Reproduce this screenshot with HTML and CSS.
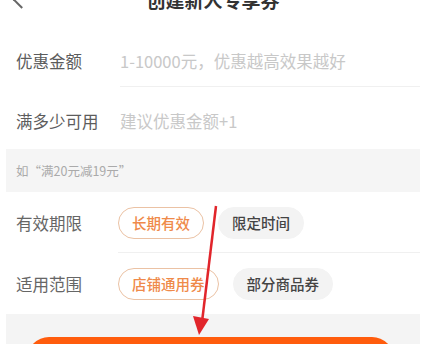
FILE: index.html
```html
<!DOCTYPE html>
<html lang="zh-CN">
<head>
  <meta charset="UTF-8">
  <meta name="viewport" content="width=device-width, initial-scale=1.0">
  <title>创建新人专享券</title>
  <link rel="stylesheet" href="styles.css">
</head>
<body>

  <div class="page">
    <div class="header">
      <span class="back"></span>
      <h2 class="title">创建新人专享券</h2>
    </div>

    <div class="form-row first">
      <span class="row-label">优惠金额</span>
      <span class="placeholder">1-10000元，优惠越高效果越好</span>
    </div>

    <div class="form-row second">
      <span class="row-label">满多少可用</span>
      <span class="placeholder">建议优惠金额+1</span>
    </div>

    <div class="tip">如“满20元减19元”</div>

    <div class="form-row option-row divided">
      <span class="row-label small">有效期限</span>
      <span class="chip active">长期有效</span>
      <span class="chip">限定时间</span>
    </div>

    <div class="form-row option-row">
      <span class="row-label small">适用范围</span>
      <span class="chip active">店铺通用券</span>
      <span class="chip">部分商品券</span>
    </div>

    <div class="footer">
      <button class="submit-button"></button>
    </div>

    <!-- red annotation arrow -->
    <svg class="arrow" width="40" height="140" viewBox="0 0 40 140">
      <line x1="26" y1="2" x2="12" y2="118" stroke="#e1252b" stroke-width="2.5"/>
      <polygon points="3,112 19,115 9,131" fill="#e1252b"/>
    </svg>
  </div>

</body>
</html>
```

FILE: styles.css
```css
body {
  margin: 0;
  background-color: #fff;
  font-family: "Noto Sans CJK SC", "Noto Sans", sans-serif;
  overflow: hidden;
}

.page {
  position: relative;
  margin: 0 7px 0 6px;
  height: 344px;
  overflow: hidden;
}

.header {
  display: flow-root;
  position: relative;
  height: 34px;
}

.title {
  margin: -11px 0 0;
  text-align: center;
  font-size: 19px;
  line-height: 22px;
  font-weight: bold;
  color: #333;
}

.back {
  position: absolute;
  left: 9px;
  top: -7px;
  width: 11px;
  height: 11px;
  border-left: 2px solid #666;
  border-bottom: 2px solid #666;
  transform: rotate(45deg);
}

.form-row {
  display: flex;
  align-items: center;
  padding-left: 10px;
}

.form-row.first {
  position: relative;
  height: 53px;
}

.form-row.first:after {
  content: "";
  position: absolute;
  left: 114px;
  right: 0;
  bottom: 0;
  height: 1px;
  background-color: #f0f0f0;
}

.form-row.second {
  height: 62px;
  padding-top: 6px;
  box-sizing: border-box;
}

.row-label {
  width: 104px;
  font-size: 16.5px;
  color: #5c5c5c;
}

.row-label.small {
  color: #666;
}

.placeholder {
  font-size: 16.5px;
  color: #c8c8c8;
}

.tip {
  height: 43px;
  line-height: 43px;
  padding-left: 10px;
  background-color: #f5f5f5;
  font-size: 12.5px;
  color: #aaa;
}

.option-row {
  height: 61px;
  gap: 14px;
}

.option-row .row-label {
  width: 88px;
}

.option-row.divided {
  position: relative;
}

.option-row.divided:after {
  content: "";
  position: absolute;
  left: 112px;
  right: 0;
  bottom: 0;
  height: 1px;
  background-color: #f0f0f0;
}

.chip {
  height: 32px;
  line-height: 30px;
  box-sizing: border-box;
  padding: 0 13px;
  border: 1px solid #f3f3f3;
  border-radius: 16px;
  background-color: #f3f3f3;
  font-size: 14.5px;
  font-weight: 500;
  color: #444;
}

.chip.active {
  background-color: #fff;
  border-color: #ebc2a4;
  color: #ef8a4a;
}

.footer {
  height: 30px;
  overflow: hidden;
  padding: 23px 26px 0 21px;
  box-sizing: border-box;
  background-color: #f4f4f4;
}

.submit-button {
  display: block;
  width: 100%;
  height: 44px;
  border: none;
  border-radius: 22px;
  background-color: #ff5c0d;
}

.arrow {
  position: absolute;
  left: 184px;
  top: 204px;
}
```
